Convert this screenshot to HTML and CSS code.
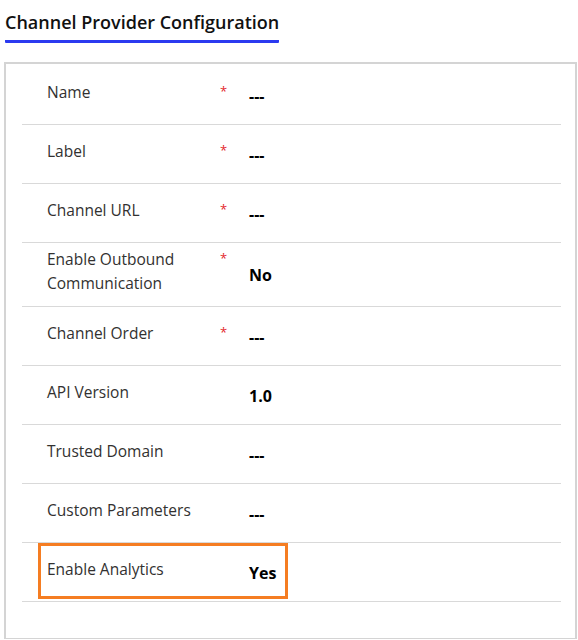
FILE: index.html
```html
<!DOCTYPE html>
<html>
<head>
<meta charset="utf-8">
<link rel="stylesheet" href="styles.css">
</head>
<body>
<div class="header">
  <h1 class="title">Channel Provider Configuration</h1>
</div>
<div class="card">
  <div class="row"><div class="field"><span class="label">Name</span><span class="req">*</span></div><div class="value">---</div></div>
  <div class="row"><div class="field"><span class="label">Label</span><span class="req">*</span></div><div class="value">---</div></div>
  <div class="row"><div class="field"><span class="label">Channel URL</span><span class="req">*</span></div><div class="value">---</div></div>
  <div class="row"><div class="field"><span class="label">Enable Outbound Communication</span><span class="req">*</span></div><div class="value">No</div></div>
  <div class="row"><div class="field"><span class="label">Channel Order</span><span class="req">*</span></div><div class="value">---</div></div>
  <div class="row"><div class="field"><span class="label">API Version</span></div><div class="value">1.0</div></div>
  <div class="row"><div class="field"><span class="label">Trusted Domain</span></div><div class="value">---</div></div>
  <div class="row"><div class="field"><span class="label">Custom Parameters</span></div><div class="value">---</div></div>
  <div class="row"><div class="field"><span class="label">Enable Analytics</span></div><div class="value">Yes</div><div class="highlight"></div></div>
</div>
</body>
</html>
```
FILE: styles.css
```css
html, body {
  margin: 0;
  padding: 0;
  background: #ffffff;
  font-family: "Open Sans", "Noto Sans", sans-serif;
}
.header {
  padding: 8px 0 0 5px;
  height: 62px;
  box-sizing: border-box;
}
.title {
  display: inline-block;
  margin: 0;
  font-size: 18px;
  font-weight: 600;
  color: #111111;
  line-height: 28px;
  padding-bottom: 4px;
  border-bottom: 3px solid #2b3af0;
  border-radius: 1px;
}
.card {
  margin-left: 4px;
  width: 573px;
  height: 577px;
  box-sizing: border-box;
  border: 2px solid #d4d4d4;
  border-bottom-width: 1px;
  padding: 2px 14px 0 16px;
}
.row {
  position: relative;
  display: grid;
  grid-template-columns: 202px 1fr;
  border-bottom: 1px solid #d9d9d9;
  padding-left: 25px;
  box-sizing: border-box;
  min-height: 59px;
}
.field {
  align-self: center;
  display: flex;
  align-items: flex-start;
  padding: 4px 0 11px;
}
.label {
  width: 173px;
  font-size: 15.5px;
  line-height: 24px;
  color: #323130;
  padding-right: 20px;
  box-sizing: border-box;
}
.req {
  margin-top: 3px;
  font-size: 13px;
  line-height: 16px;
  color: #e3262b;
}
.value {
  align-self: center;
  font-size: 16px;
  font-weight: 700;
  color: #000000;
  padding-top: 1px;
}
.highlight {
  position: absolute;
  left: 16px;
  top: 0;
  width: 250px;
  height: 56px;
  border: 3px solid #f57d22;
  box-sizing: border-box;
}
```
